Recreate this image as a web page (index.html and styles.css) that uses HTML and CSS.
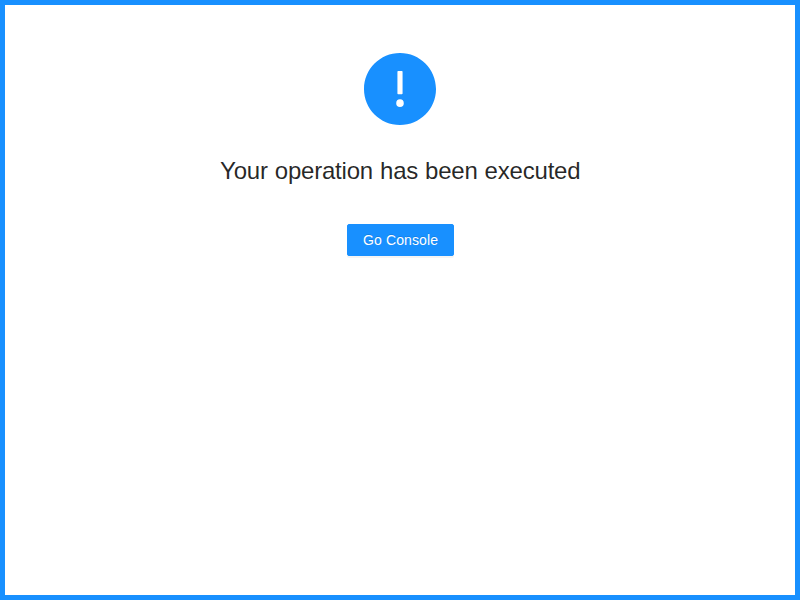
FILE: index.html
```html
<!DOCTYPE html>
<html lang="en">
<head>
<meta charset="utf-8">
<title>Result</title>
<link rel="stylesheet" href="styles.css">
</head>
<body>
<main class="result">
  <div class="result-icon">
    <svg viewBox="64 64 896 896" width="72" height="72" fill="currentColor" aria-hidden="true"><path d="M512 64C264.600 64 64 264.600 64 512s200.600 448 448 448 448-200.600 448-448S759.400 64 512 64zm-32 232c0-4.400 3.600-8 8-8h48c4.400 0 8 3.600 8 8v272c0 4.400-3.600 8-8 8h-48c-4.400 0-8-3.600-8-8V296zm32 440a48.010 48.010 0 0 1 0-96 48.010 48.010 0 0 1 0 96z"/></svg>
  </div>
  <div class="result-title">Your operation has been executed</div>
  <div class="result-extra"><button class="btn" type="button">Go Console</button></div>
</main>
</body>
</html>
```
FILE: styles.css
```css
* {
  box-sizing: border-box;
}

body {
  margin: 0;
  background: #fff;
  color: rgba(0, 0, 0, 0.85);
  font-family: "Liberation Sans", Arial, sans-serif;
  font-size: 14px;
  line-height: 1.5715;
}

.result {
  min-height: 100vh;
  padding: 48px 32px;
  border: 5px solid #1890ff;
}

.result-icon {
  margin-bottom: 24px;
  color: #1890ff;
  text-align: center;
}

.result-icon svg {
  display: block;
  margin: 0 auto;
}

.result-title {
  padding-left: 0.5px;
  font-size: 24px;
  line-height: 1.8;
  letter-spacing: -0.2px;
  word-spacing: 0.5px;
  text-align: center;
}

.result-extra {
  margin-top: 32px;
  text-align: center;
}

.btn {
  width: 107px;
  height: 32px;
  padding: 4px 14px 4px 15.500px;
  border: 1px solid #1890ff;
  border-radius: 2px;
  background: #1890ff;
  color: #fff;
  font: inherit;
  text-align: left;
  letter-spacing: 0.12px;
  white-space: nowrap;
  text-shadow: 0 -1px 0 rgba(0, 0, 0, 0.12);
  box-shadow: 0 2px 0 rgba(0, 0, 0, 0.045);
}
```
